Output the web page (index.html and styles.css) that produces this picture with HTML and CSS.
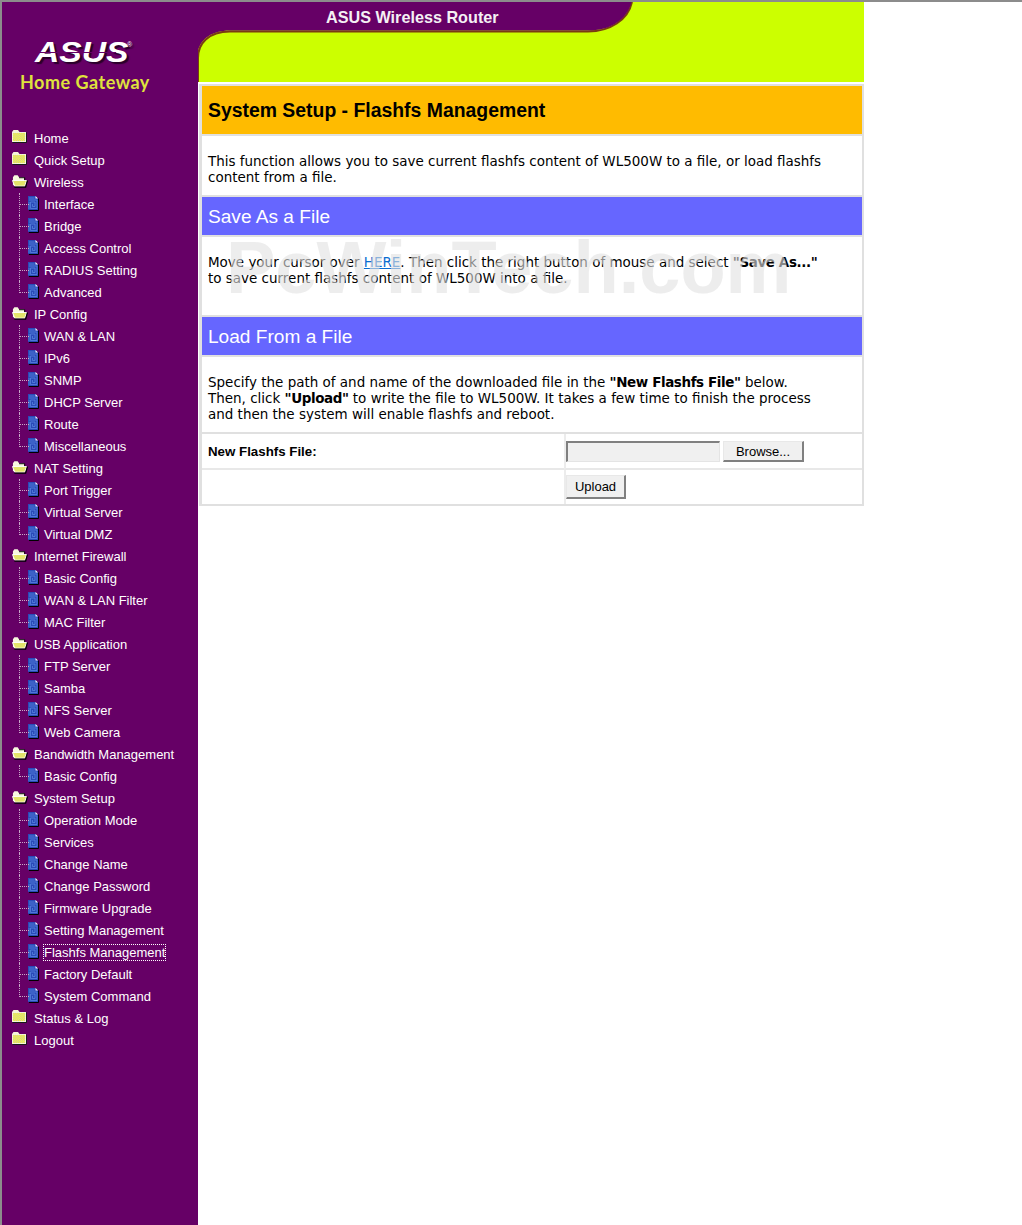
FILE: index.html
```html
<!DOCTYPE html>
<html lang="en">
<head>
<meta charset="utf-8">
<title>ASUS Wireless Router</title>
<link rel="stylesheet" href="styles.css">
</head>
<body>
<svg class="sprite" width="0" height="0" aria-hidden="true">
  <defs>
    <pattern id="dither" width="2" height="2" patternUnits="userSpaceOnUse">
      <rect width="2" height="2" fill="#ffff33"/>
      <rect width="1" height="1" fill="#c8c8a0"/>
      <rect x="1" y="1" width="1" height="1" fill="#c8c8a0"/>
    </pattern>
    <symbol id="folder" viewBox="0 0 16 14">
      <path d="M0 2 1.500 0H6L7.500 2H14V12H0Z" fill="#f4f4d8"/>
      <rect x="1" y="3" width="12" height="8" fill="url(#dither)"/>
      <path d="M14.500 2.500V12.500H.5" fill="none" stroke="#1a1a1a" stroke-width="1"/>
    </symbol>
    <symbol id="folder-open" viewBox="0 0 17 14">
      <path d="M1 3 2.500 1H6L7.500 3H13V11.500H1Z" fill="#f8f8e0"/>
      <path d="M.5 6.500H15.500L13.500 12.500H3Z" fill="url(#dither)" stroke="#fff" stroke-width="1"/>
      <path d="M7.500 3.500H13.500V6" fill="none" stroke="#000" stroke-width="1"/>
      <path d="M2.500 13.500H14.500L16.500 6.500" fill="none" stroke="#000" stroke-width="1.300"/>
    </symbol>
    <symbol id="doc" viewBox="0 0 11 15">
      <path d="M0 0H7.500L10 2.500V14H0Z" fill="#2a4ab8"/>
      <path d="M7.500 0 10 2.500H7.500Z" fill="#fff"/>
      <path d="M1 2H6.500M1 4H9V12.500H2.500V6H7V10.500H4.500V8M1 6V13" fill="none" stroke="#5f8ce4" stroke-width=".7"/>
      <path d="M10.500 2.500V14.500H1" fill="none" stroke="#000" stroke-width="1"/>
    </symbol>
  </defs>
</svg>
<div class="page">
  <aside class="sidebar">
    <div class="logo">
      <div class="asus"><span class="asus-word">ASUS</span><span class="asus-reg">®</span></div>
      <div class="gateway">Home Gateway</div>
    </div>
    <ul class="nav">
      <li class="top"><svg class="ico-folder"><use href="#folder"/></svg><a href="#">Home</a></li>
      <li class="top"><svg class="ico-folder"><use href="#folder"/></svg><a href="#">Quick Setup</a></li>
      <li class="top"><svg class="ico-folder"><use href="#folder-open"/></svg><a href="#">Wireless</a></li>
      <li><ul class="sub">
        <li><svg class="ico-doc"><use href="#doc"/></svg><a href="#">Interface</a></li>
        <li><svg class="ico-doc"><use href="#doc"/></svg><a href="#">Bridge</a></li>
        <li><svg class="ico-doc"><use href="#doc"/></svg><a href="#">Access Control</a></li>
        <li><svg class="ico-doc"><use href="#doc"/></svg><a href="#">RADIUS Setting</a></li>
        <li><svg class="ico-doc"><use href="#doc"/></svg><a href="#">Advanced</a></li>
      </ul></li>
      <li class="top"><svg class="ico-folder"><use href="#folder-open"/></svg><a href="#">IP Config</a></li>
      <li><ul class="sub">
        <li><svg class="ico-doc"><use href="#doc"/></svg><a href="#">WAN &amp; LAN</a></li>
        <li><svg class="ico-doc"><use href="#doc"/></svg><a href="#">IPv6</a></li>
        <li><svg class="ico-doc"><use href="#doc"/></svg><a href="#">SNMP</a></li>
        <li><svg class="ico-doc"><use href="#doc"/></svg><a href="#">DHCP Server</a></li>
        <li><svg class="ico-doc"><use href="#doc"/></svg><a href="#">Route</a></li>
        <li><svg class="ico-doc"><use href="#doc"/></svg><a href="#">Miscellaneous</a></li>
      </ul></li>
      <li class="top"><svg class="ico-folder"><use href="#folder-open"/></svg><a href="#">NAT Setting</a></li>
      <li><ul class="sub">
        <li><svg class="ico-doc"><use href="#doc"/></svg><a href="#">Port Trigger</a></li>
        <li><svg class="ico-doc"><use href="#doc"/></svg><a href="#">Virtual Server</a></li>
        <li><svg class="ico-doc"><use href="#doc"/></svg><a href="#">Virtual DMZ</a></li>
      </ul></li>
      <li class="top"><svg class="ico-folder"><use href="#folder-open"/></svg><a href="#">Internet Firewall</a></li>
      <li><ul class="sub">
        <li><svg class="ico-doc"><use href="#doc"/></svg><a href="#">Basic Config</a></li>
        <li><svg class="ico-doc"><use href="#doc"/></svg><a href="#">WAN &amp; LAN Filter</a></li>
        <li><svg class="ico-doc"><use href="#doc"/></svg><a href="#">MAC Filter</a></li>
      </ul></li>
      <li class="top"><svg class="ico-folder"><use href="#folder-open"/></svg><a href="#">USB Application</a></li>
      <li><ul class="sub">
        <li><svg class="ico-doc"><use href="#doc"/></svg><a href="#">FTP Server</a></li>
        <li><svg class="ico-doc"><use href="#doc"/></svg><a href="#">Samba</a></li>
        <li><svg class="ico-doc"><use href="#doc"/></svg><a href="#">NFS Server</a></li>
        <li><svg class="ico-doc"><use href="#doc"/></svg><a href="#">Web Camera</a></li>
      </ul></li>
      <li class="top"><svg class="ico-folder"><use href="#folder-open"/></svg><a href="#">Bandwidth Management</a></li>
      <li><ul class="sub">
        <li><svg class="ico-doc"><use href="#doc"/></svg><a href="#">Basic Config</a></li>
      </ul></li>
      <li class="top"><svg class="ico-folder"><use href="#folder-open"/></svg><a href="#">System Setup</a></li>
      <li><ul class="sub">
        <li><svg class="ico-doc"><use href="#doc"/></svg><a href="#">Operation Mode</a></li>
        <li><svg class="ico-doc"><use href="#doc"/></svg><a href="#">Services</a></li>
        <li><svg class="ico-doc"><use href="#doc"/></svg><a href="#">Change Name</a></li>
        <li><svg class="ico-doc"><use href="#doc"/></svg><a href="#">Change Password</a></li>
        <li><svg class="ico-doc"><use href="#doc"/></svg><a href="#">Firmware Upgrade</a></li>
        <li><svg class="ico-doc"><use href="#doc"/></svg><a href="#">Setting Management</a></li>
        <li><svg class="ico-doc"><use href="#doc"/></svg><a class="current" href="#">Flashfs Management</a></li>
        <li><svg class="ico-doc"><use href="#doc"/></svg><a href="#">Factory Default</a></li>
        <li><svg class="ico-doc"><use href="#doc"/></svg><a href="#">System Command</a></li>
      </ul></li>
      <li class="top"><svg class="ico-folder"><use href="#folder"/></svg><a href="#">Status &amp; Log</a></li>
      <li class="top"><svg class="ico-folder"><use href="#folder"/></svg><a href="#">Logout</a></li>
    </ul>
  </aside>
  <main class="main">
    <header class="banner">
      <svg class="banner-art" width="666" height="80" viewBox="0 0 666 80" aria-hidden="true">
        <path d="M434 0C430 18 412 29.500 390 29.500H32C10 29.500 0 42 0 56V80" fill="none" stroke="#7a3c10" stroke-width="2"/>
        <path d="M-2 -2H434C430 18 412 28.500 390 28.500H32C9 28.500 -1 42 -1 56V82H-2Z" fill="#660066"/>
      </svg>
      <div class="banner-title">ASUS Wireless Router</div>
    </header>
    <section class="panel">
      <h1 class="panel-title">System Setup - Flashfs Management</h1>
      <div class="copy copy-intro">This function allows you to save current flashfs content of WL500W to a file, or load flashfs<br>content from a file.</div>
      <h2 class="band">Save As a File</h2>
      <div class="copy copy-save">Move your cursor over <a class="link" href="#">HERE</a>. Then click the right button of mouse and select <b>"Save As..."</b><br>to save current flashfs content of WL500W into a file.</div>
      <h2 class="band">Load From a File</h2>
      <div class="copy copy-load">Specify the path of and name of the downloaded file in the <b>"New Flashfs File"</b> below.<br>Then, click <b>"Upload"</b> to write the file to WL500W. It takes a few time to finish the process<br>and then the system will enable flashfs and reboot.</div>
      <div class="form-grid">
        <div class="cell cell-label cell-first">New Flashfs File:</div>
        <div class="cell cell-field cell-first">
          <input class="file-path" type="text" aria-label="New Flashfs File" disabled>
          <button class="btn btn-browse" type="button">Browse...</button>
        </div>
        <div class="cell cell-label"></div>
        <div class="cell cell-field">
          <button class="btn btn-upload" type="button">Upload</button>
        </div>
      </div>
      <div class="watermark" aria-hidden="true">PcWinTech.com</div>
    </section>
  </main>
</div>
</body>
</html>
```

FILE: styles.css
```css
* { box-sizing: border-box; }
html, body { margin: 0; padding: 0; background: #fff; }
body { font-family: "DejaVu Sans", Verdana, sans-serif; color: #000; }
.sprite { position: absolute; }

.page {
  display: flex;
  align-items: stretch;
  min-height: 1225px;
  border-top: 2px solid #8c8c8c;
  border-left: 2px solid #8c8c8c;
}

/* Sidebar */
.sidebar {
  width: 196px;
  flex: none;
  background: #660066;
  font-family: "Liberation Sans", Arial, sans-serif;
  font-size: 13px;
}
.logo { height: 125px; padding: 38px 0 0 18px; display: flex; flex-direction: column; align-items: flex-start; }
.asus {
  display: flex;
  width: 100px;
  height: 24px;
  align-items: flex-start;
  margin-left: 15px;
  color: #fff;
  text-shadow: 2px 2px 1px #2a002a;
}
.asus-word {
  position: relative;
  display: block;
  width: 92px;
  font: italic bold 29px/24px "Liberation Sans", Arial, sans-serif;
  transform: scaleX(1.16);
  transform-origin: left center;
}
.asus-word::after {
  content: "";
  position: absolute;
  left: 0;
  right: 22px;
  top: 12px;
  height: 1px;
  background: #660066;
}
.asus-reg { font-size: 7px; line-height: 10px; margin-left: 0; }
.gateway {
  margin-top: 7px;
  font: bold 18px/22px "Lato", "Liberation Sans", sans-serif;
  letter-spacing: .5px;
  color: #dfe23c;
  white-space: nowrap;
}
.nav, .sub { list-style: none; margin: 0; padding: 0; }
.nav a { color: #fff; text-decoration: none; white-space: nowrap; }
.top { height: 22px; display: flex; align-items: center; padding-left: 10px; }
.ico-folder { width: 16px; height: 14px; flex: none; margin-right: 6px; margin-top: -2px; }
.sub li { position: relative; height: 22px; display: flex; align-items: center; padding-left: 26px; }
.sub li::before {
  content: "";
  position: absolute;
  left: 17px;
  top: 0;
  width: 9px;
  height: 11px;
  border-left: 1px dotted #c8a8c8;
  border-bottom: 1px dotted #c8a8c8;
}
.sub li:not(:last-child)::after {
  content: "";
  position: absolute;
  left: 17px;
  top: 11px;
  height: 11px;
  border-left: 1px dotted #c8a8c8;
}
.ico-doc { width: 11px; height: 15px; flex: none; margin-right: 5px; margin-top: -1px; }
.nav a.current { outline: 1px dotted #fff; }

/* Banner */
.main { width: 666px; flex: none; }
.banner { position: relative; height: 80px; background: #ccff00; }
.banner-art { display: block; }
.banner-title {
  position: absolute;
  left: 128px;
  top: 6px;
  width: 173px;
  color: #f4f0f4;
  font: bold 16.200px/18px "Liberation Sans", Arial, sans-serif;
  white-space: nowrap;
}

/* Panel */
.panel {
  position: relative;
  margin: 2px 0 0 1px;
  width: 665px;
  border: solid #e0e0e0;
  border-width: 2px 2px 2px 3px;
  background: #fff;
}
.panel-title {
  margin: 0;
  height: 50px;
  padding-left: 6px;
  background: #ffbb00;
  border-bottom: 2px solid #e0e0e0;
  font: bold 19.400px/48px "Liberation Sans", Arial, sans-serif;
}
.band {
  margin: 0;
  height: 40px;
  padding-left: 6px;
  background: #6666ff;
  border-bottom: 2px solid #e0e0e0;
  color: #fff;
  font: normal 19.100px/39px "Liberation Sans", Arial, sans-serif;
}
.copy {
  padding: 17px 0 0 6px;
  border-bottom: 2px solid #e0e0e0;
  font-size: 13.470px;
  line-height: 16px;
  white-space: nowrap;
}
.copy b { letter-spacing: -.4px; }
.copy-intro { height: 61px; }
.copy-save { height: 80px; }
.copy-load { height: 77px; }
.link { color: #0a6cd0; }
.form-grid { display: grid; grid-template-columns: 362px 1fr; }
.cell { height: 36px; }
.cell-first { border-bottom: 2px solid #e8e8e8; }
.cell-label {
  padding-left: 6px;
  font: bold 13.300px/35px "Liberation Sans", Arial, sans-serif;
}
.cell-field {
  display: flex;
  align-items: flex-start;
  gap: 3px;
  padding: 7px 0 0 0;
  border-left: 2px solid #ececec;
}
.cell-field:last-child { padding-top: 5px; height: 34px; }
.cell-label:nth-last-child(2) { height: 34px; }
.file-path {
  width: 154px;
  height: 21px;
  margin: 0;
  padding: 0;
  background: #f0f0f0;
  border: 1px solid #e4e4e4;
  border-top: 2px solid #808080;
  border-left: 2px solid #808080;
}
.btn {
  margin: 0;
  padding: 0;
  background: #f0f0f0;
  color: #000;
  border: 1px solid #e8e8e8;
  border-right: 2px solid #808080;
  border-bottom: 2px solid #808080;
  font: 13px "Liberation Sans", Arial, sans-serif;
}
.btn-browse { width: 81px; height: 21px; }
.btn-upload { width: 60px; height: 24px; }
.watermark {
  position: absolute;
  left: 24px;
  top: 150px;
  width: 570px;
  color: rgba(225, 225, 225, .6);
  font: bold 74px/64px "Liberation Sans", Arial, sans-serif;
  white-space: nowrap;
  pointer-events: none;
}
```
